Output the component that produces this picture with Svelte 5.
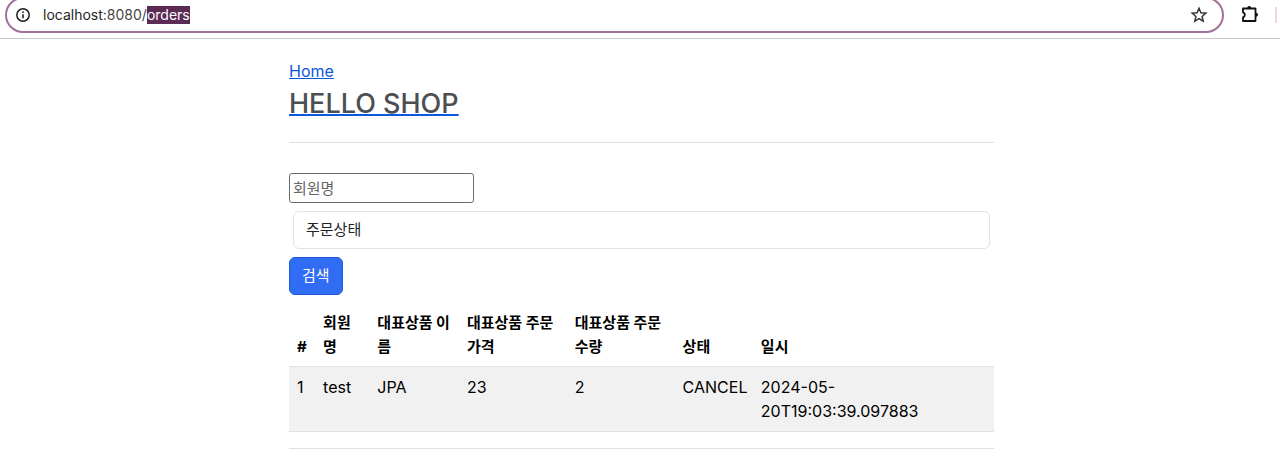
<script>
  const columns = [
    { label: '#', size: 'c-id' },
    { label: '회원명', size: 'c-member' },
    { label: '대표상품 이름', size: 'c-item' },
    { label: '대표상품 주문가격', size: 'c-price' },
    { label: '대표상품 주문수량', size: 'c-price' },
    { label: '상태', size: 'c-status' },
    { label: '일시', size: 'c-date' }
  ];
  const orders = [[1, 'test', 'JPA', 23, 2, 'CANCEL', '2024-05-20T19:03:39.097883']];
</script>

<header class="toolbar">
  <div class="address">
    <button class="icon" aria-label="Site information">
      <svg width="16" height="16" viewBox="0 0 16 16" fill="none" stroke="#1f1f1f">
        <circle cx="8" cy="8" r="6.2" stroke-width="1.5" />
        <path d="M8 7.2v4M8 4.5v1.5" stroke-width="1.6" />
      </svg>
    </button>
    <div class="url">localhost<span class="port">:8080/</span><mark>orders</mark></div>
    <button class="icon" aria-label="Bookmark this page">
      <svg width="18" height="18" viewBox="0 0 18 18" fill="none" stroke="#333" stroke-width="1.5">
        <path d="M9 2.2l1.9 4.6 4.9.4-3.7 3.2 1.1 4.8L9 12.7l-4.2 2.5 1.1-4.8-3.7-3.2 4.9-.4z" />
      </svg>
    </button>
  </div>
  <button class="icon" aria-label="Extensions">
    <svg width="20" height="20" viewBox="0 0 20 20">
      <path d="M3 3.5h12.500v12.500H3v-3.700c2.500-1 2.500-4 0-5z" fill="none" stroke="#111" stroke-width="1.800" stroke-linejoin="round" />
      <path d="M7.200 3a2 2 0 0 1 4 0zM16 7.800a2 2 0 0 1 0 4z" fill="#111" />
    </svg>
  </button>
  <span class="divider"></span>
</header>

<main>
  <a class="home" href="/">Home</a>
  <h1><a href="/">HELLO SHOP</a></h1>
  <hr />
  <form onsubmit={(e) => e.preventDefault()}>
    <input type="text" placeholder="회원명" aria-label="회원명" />
    <select aria-label="주문상태">
      <option>주문상태</option>
      <option>ORDER</option>
      <option>CANCEL</option>
    </select>
    <button class="search" type="submit">검색</button>
  </form>
  <table>
    <colgroup>
      {#each columns as c}<col class={c.size} />{/each}
    </colgroup>
    <thead>
      <tr>{#each columns as c}<th>{c.label}</th>{/each}</tr>
    </thead>
    <tbody>
      {#each orders as row}
        <tr>{#each row as value}<td>{value}</td>{/each}</tr>
      {/each}
    </tbody>
  </table>
  <hr class="end" />
</main>

<style>
  :global(body) {
    margin: 0;
    background: #fff;
    color: #000;
    font-family: Inter, 'Noto Sans CJK KR', sans-serif;
    font-size: 16px;
    line-height: 24px;
  }
  * { box-sizing: border-box; }
  .toolbar {
    display: flex;
    align-items: flex-start;
    height: 39px;
    border-bottom: 1px solid #c8c8c8;
    overflow: hidden;
  }
  .address {
    flex: 1;
    display: flex;
    align-items: center;
    height: 36px;
    margin: -3px 16px 0 5px;
    padding: 0 14px 0 8px;
    border: 2px solid #a0709a;
    border-radius: 18px;
  }
  .icon {
    display: flex;
    padding: 0;
    border: 0;
    background: none;
  }
  .toolbar > .icon { margin-top: 5px; }
  .url {
    flex: 1;
    margin-left: 12px;
    font-size: 14px;
    line-height: 18px;
    color: #1f1f1f;
  }
  .port { color: #474747; }
  mark {
    display: inline-block;
    background: #5b2a55;
    color: #fff;
  }
  .divider {
    width: 2px;
    height: 16px;
    margin: 7px 3px 0 15px;
    background: #f3d3e6;
  }
  main {
    max-width: 732px;
    margin: 0 auto;
    padding: 20px 12px 0 15px;
  }
  a { color: #0b57e0; }
  .home { display: block; width: max-content; }
  h1 {
    margin: 4px 0 0;
    font-size: 27px;
    line-height: 34px;
    font-weight: 500;
  }
  h1 a {
    color: #4b4e52;
    text-decoration-color: #0b57e0;
    text-decoration-thickness: 2px;
  }
  hr {
    margin: 20px 0 0;
    border: 0;
    border-top: 1px solid #e0e0e1;
  }
  h1 + hr { margin-top: 21px; }
  form {
    display: flex;
    flex-direction: column;
    align-items: flex-start;
    gap: 8px;
    padding: 30px 0 8px;
  }
  input, select, .search {
    font-family: inherit;
    font-size: 15px;
    line-height: 24px;
  }
  input {
    width: 185px;
    height: 30px;
    padding: 0 3px;
    border: 1px solid #6b6b6b;
    border-radius: 3px;
    background: #fff;
  }
  input::placeholder { color: #666; opacity: 1; }
  select {
    appearance: none;
    align-self: stretch;
    height: 38px;
    margin: 0 4px;
    padding: 0 12px;
    border: 1px solid #dfe2e6;
    border-radius: 6px;
    background: #fff;
    color: #212529;
  }
  .search {
    height: 38px;
    padding: 0 12px;
    border: 1px solid #1c5be0;
    border-radius: 6px;
    background: #316cf4;
    color: #fff;
  }
  table {
    width: 100%;
    table-layout: fixed;
    border-collapse: collapse;
  }
  .c-id { width: 3.7%; }
  .c-member { width: 7.7%; }
  .c-item { width: 12.7%; }
  .c-price { width: 15.3%; }
  .c-status { width: 11.1%; }
  th, td {
    padding: 8px;
    border-bottom: 1px solid #dee2e6;
    text-align: left;
  }
  th {
    padding-bottom: 7px;
    font-size: 15px;
    font-weight: 700;
    vertical-align: bottom;
  }
  td {
    vertical-align: top;
    background: #f1f1f1;
  }
  .end { margin-top: 16px; }
</style>
